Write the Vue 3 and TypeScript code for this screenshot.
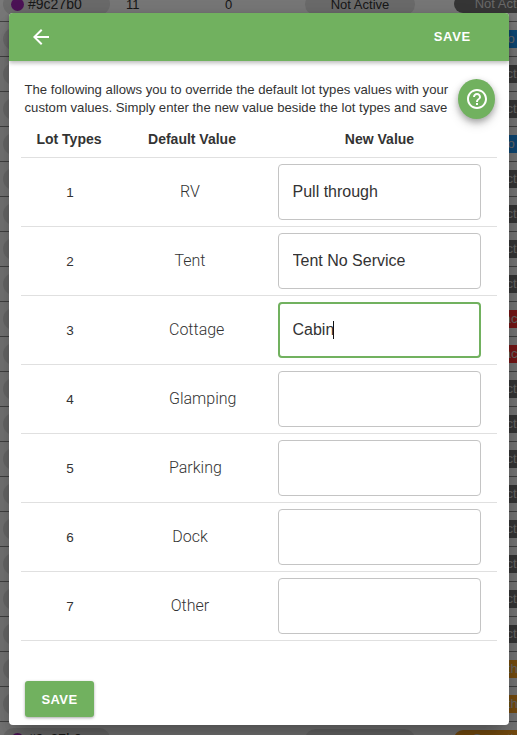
<script setup lang="ts">
type Tone = 'dark' | 'blue' | 'red' | 'orange'
interface BgRow { tone: Tone; label: string; detail: boolean }
const labelOf: Record<Tone, string> = { dark: 'Not Active', blue: 'Info', red: 'Not Vacant', orange: 'Something' }
const tones: Tone[] = ['dark','blue','dark','dark','blue','dark','dark','dark','dark','red','red','dark','dark','dark','dark','dark','dark','dark','dark','orange','orange','orange']
const bgRows: BgRow[] = tones.map((t, i) => ({ tone: t, label: labelOf[t], detail: i === 0 || i === tones.length - 1 }))
const lots = [
  { id: 1, name: 'RV', value: 'Pull through', focus: false },
  { id: 2, name: 'Tent', value: 'Tent No Service', focus: false },
  { id: 3, name: 'Cottage', value: 'Cabin', focus: true },
  { id: 4, name: 'Glamping', value: '', focus: false },
  { id: 5, name: 'Parking', value: '', focus: false },
  { id: 6, name: 'Dock', value: '', focus: false },
  { id: 7, name: 'Other', value: '', focus: false },
]
</script>

<template>
  <div class="page">
    <div class="bg-table">
      <div v-for="(r, i) in bgRows" :key="i" class="bg-row">
        <div class="color-pill"><template v-if="r.detail"><span class="dot"></span>#9c27b0</template></div>
        <div class="count"><template v-if="r.detail">11</template></div>
        <div class="zero"><template v-if="r.detail">0</template></div>
        <div class="mid-pill"><template v-if="r.detail">Not Active</template></div>
        <div class="tone-pill" :class="r.tone">{{ r.label }}</div>
      </div>
    </div>

    <div class="overlay">
      <section class="modal">
        <header class="bar">
          <svg class="back" viewBox="0 0 24 24" width="24" height="24" aria-hidden="true">
            <path fill="#fff" d="M20 11H7.83l5.59-5.59L12 4l-8 8 8 8 1.41-1.41L7.83 13H20v-2z" />
          </svg>
          <span class="bar-save">SAVE</span>
        </header>

        <div class="content">
          <p class="intro">The following allows you to override the default lot types values with your custom values. Simply enter the new value beside the lot types and save</p>

          <button class="fab" type="button" aria-label="Help">
            <svg viewBox="0 0 24 24" width="24" height="24" aria-hidden="true">
              <path fill="#fff" d="M11 18h2v-2h-2v2zm1-16C6.48 2 2 6.48 2 12s4.48 10 10 10 10-4.48 10-10S17.52 2 12 2zm0 18c-4.41 0-8-3.59-8-8s3.59-8 8-8 8 3.59 8 8-3.59 8-8 8zm0-14c-2.21 0-4 1.79-4 4h2c0-1.1.9-2 2-2s2 .9 2 2c0 2-3 1.75-3 5h2c0-2.25 3-2.5 3-5 0-2.21-1.79-4-4-4z" />
            </svg>
          </button>

          <div class="lot-table">
            <div class="lot-row head">
              <div class="c-id">Lot Types</div>
              <div class="c-def-head">Default Value</div>
              <div class="c-new">New Value</div>
            </div>
            <div v-for="lot in lots" :key="lot.id" class="lot-row">
              <div class="c-id num">{{ lot.id }}</div>
              <div class="c-def"><span class="def-box">{{ lot.name }}</span></div>
              <div class="c-new">
                <div class="field">
                  <input class="input" :class="{ focused: lot.focus }" type="text" :value="lot.value" readonly />
                  <span v-if="lot.focus" class="caret"></span>
                </div>
              </div>
            </div>
          </div>
        </div>

        <footer class="foot">
          <button class="save" type="button">SAVE</button>
        </footer>
      </section>
    </div>
  </div>
</template>

<style>
html, body { margin: 0; padding: 0; overflow: hidden; }
</style>

<style scoped>
.page {
  position: relative;
  width: 517px;
  height: 735px;
  overflow: hidden;
  background: #f6f6f6;
  font-family: "Liberation Sans", Arial, sans-serif;
}
.bg-table { margin-top: -13px; }
.bg-row {
  display: grid;
  grid-template-columns: 110px 115px 80px 110px 1fr;
  align-items: center;
  height: 34px;
  border-bottom: 1px solid #888;
  font-size: 13px;
  color: #333;
  white-space: nowrap;
}
.color-pill {
  display: flex;
  align-items: center;
  gap: 4px;
  margin-left: 3px;
  height: 22px;
  padding-left: 8px;
  border-radius: 11px;
  background: #dcdcdc;
  font-size: 14px;
}
.dot { width: 13px; height: 13px; border-radius: 50%; background: #9c27b0; }
.count { padding-left: 16px; font-size: 13px; }
.mid-pill {
  height: 21px;
  line-height: 21px;
  border-radius: 11px;
  background: #dcdcdc;
  text-align: center;
}
.tone-pill {
  margin-left: 39px;
  width: 100px;
  height: 18px;
  line-height: 18px;
  border-radius: 9px;
  text-align: center;
  color: #d8d8d8;
}
.dark { background: #707070; }
.blue { background: #1c94f0; }
.red { background: #f83030; }
.orange { background: #f9a020; }

.overlay {
  position: absolute;
  inset: 0;
  display: flex;
  padding: 13px 8px 10px 9px;
  background: rgba(0, 0, 0, 0.5);
}
.modal {
  position: relative;
  flex: 1;
  display: flex;
  flex-direction: column;
  border-radius: 4px;
  background: #fff;
  box-shadow: 0 11px 15px -7px rgba(0,0,0,.2), 0 24px 38px 3px rgba(0,0,0,.14), 0 9px 46px 8px rgba(0,0,0,.12);
}
.bar {
  flex: none;
  display: flex;
  align-items: center;
  justify-content: space-between;
  height: 48px;
  padding: 0 38px 0 20px;
  border-radius: 4px 4px 0 0;
  background: #71b15f;
  box-shadow: 0 2px 4px rgba(0,0,0,.28);
}
.back { display: block; }
.bar-save {
  color: #fff;
  font-size: 13px;
  font-weight: 700;
  letter-spacing: .7px;
  margin-top: -2px;
}
.content { padding: 20px 12px 0 12px; }
.intro {
  margin: 0 0 0 3.5px;
  width: 445px;
  font-size: 13.15px;
  line-height: 18px;
  color: #333;
}
.fab {
  position: absolute;
  left: 449px;
  top: 66px;
  display: flex;
  align-items: center;
  justify-content: center;
  width: 37px;
  height: 40px;
  padding: 0;
  border: 0;
  border-radius: 50%;
  background: #71b15f;
  box-shadow: 0 3px 6px rgba(0,0,0,.28), 0 5px 12px rgba(0,0,0,.14);
}
.lot-table { margin-top: 4px; }
.lot-row {
  display: grid;
  grid-template-columns: 96px 150px 1fr;
  align-items: center;
  height: 68px;
  border-bottom: 1px solid #e0e0e0;
}
.lot-row.head {
  box-sizing: border-box;
  height: 37px;
  font-size: 14px;
  font-weight: 700;
  color: #333;
}
.c-id { text-align: center; }
.num { padding-left: 2px; font-size: 13.5px; color: #333; }
.c-def-head { text-align: center; }
.c-def { margin-top: -2px; font-family: Roboto, "Liberation Sans", sans-serif; font-weight: 300; font-size: 16px; color: #333; }
.def-box {
  display: block;
  width: 42px;
  margin-left: 52px;
  text-align: center;
  white-space: nowrap;
}
.c-new { padding: 0 16px 0 11px; text-align: center; }
.field { position: relative; height: 56px; }
.input {
  display: block;
  box-sizing: border-box;
  width: 100%;
  height: 56px;
  padding: 0 13.5px;
  border: 1px solid #c4c4c4;
  border-radius: 4px;
  outline: none;
  background: #fff;
  font-family: "Liberation Sans", Arial, sans-serif;
  font-size: 16px;
  color: #333;
}
.input.focused { border: 2px solid #71b15f; padding: 0 12.5px; }
.caret {
  position: absolute;
  left: 55px;
  top: 19px;
  width: 1px;
  height: 18px;
  background: #111;
}
.foot {
  margin-top: auto;
  padding: 0 16px 8px;
}
.save {
  display: block;
  width: 69px;
  height: 36px;
  padding: 0;
  border: 0;
  border-radius: 3px;
  background: #71b15f;
  color: #fff;
  font-family: "Liberation Sans", Arial, sans-serif;
  font-size: 13px;
  font-weight: 700;
  letter-spacing: .4px;
  box-shadow: 0 1px 3px rgba(0,0,0,.35);
}
</style>
